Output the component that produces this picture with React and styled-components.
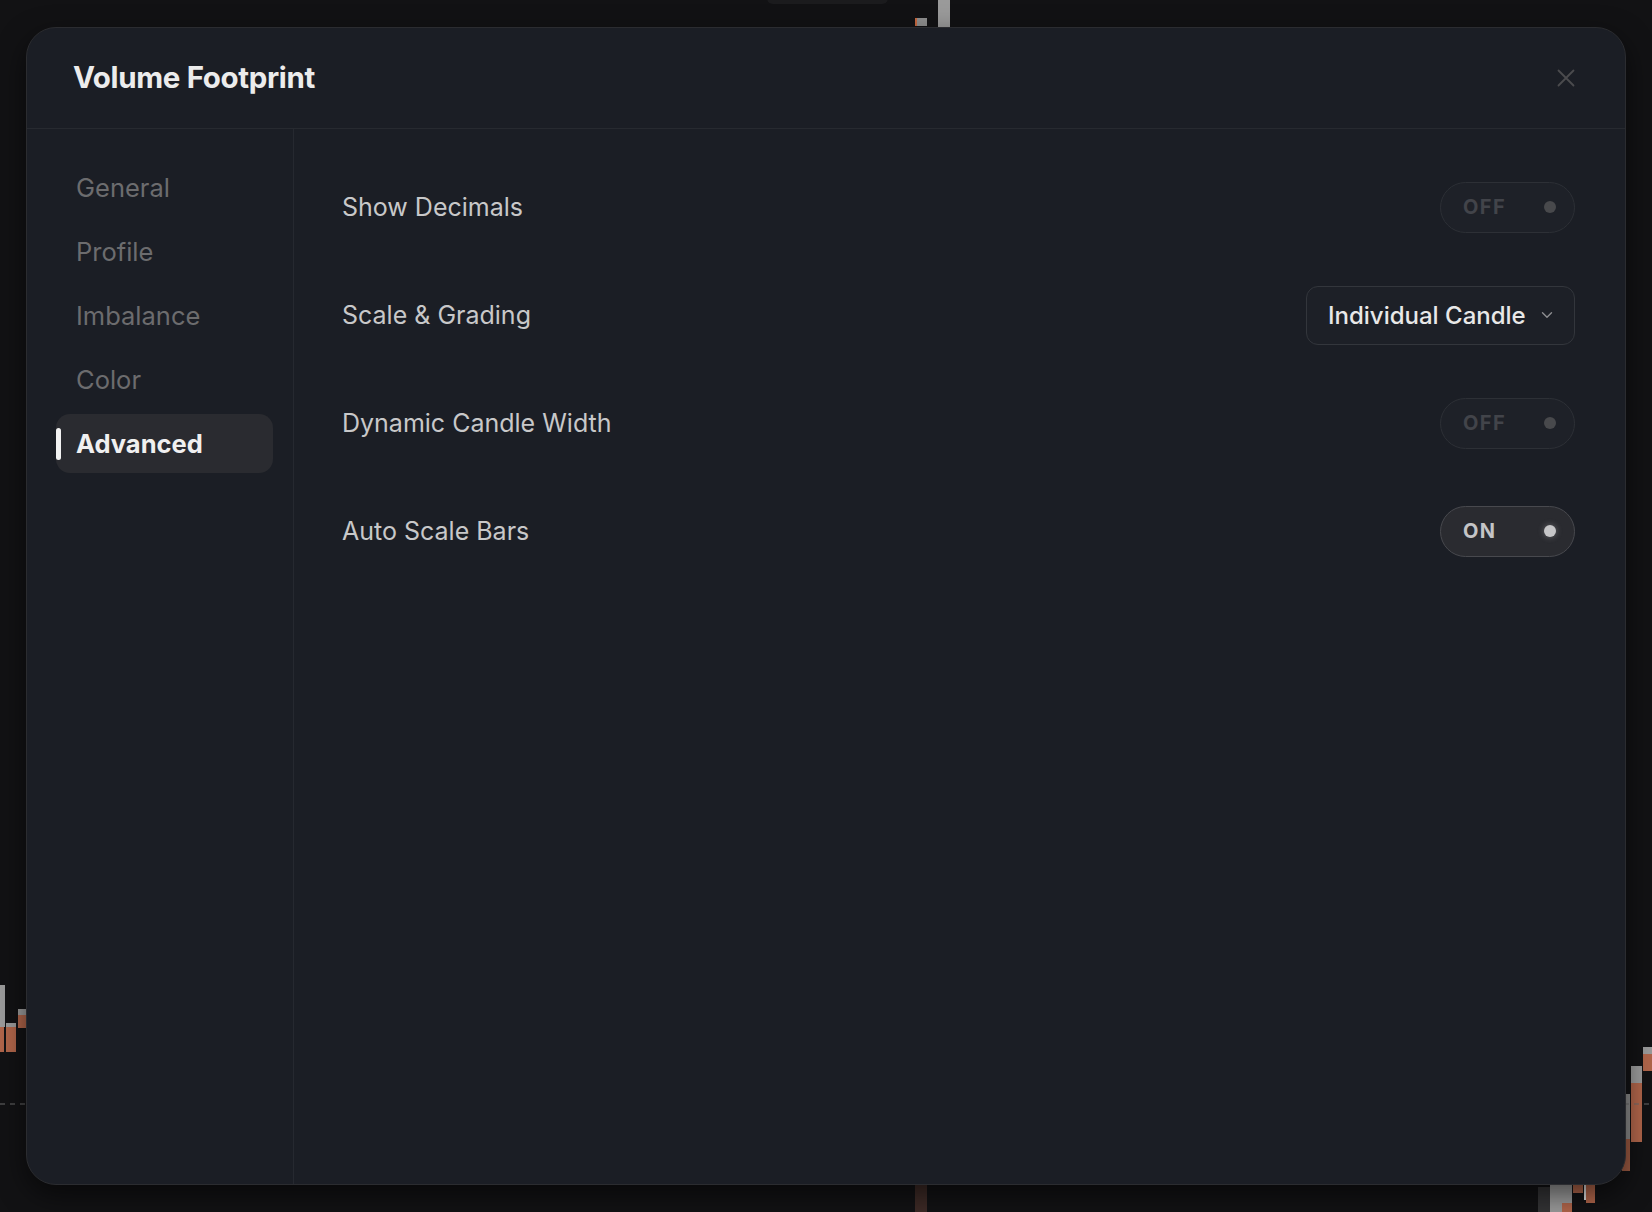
import styled, { createGlobalStyle } from "styled-components";
import { useState } from "react";

const GlobalStyle = createGlobalStyle`
  html, body {
    margin: 0;
    padding: 0;
    background: #121214;
    font-family: Inter, "Noto Sans", sans-serif;
  }
  * { box-sizing: border-box; }
`;

const navItems = ["General", "Profile", "Imbalance", "Color", "Advanced"];

const settings = [
  { id: "decimals", label: "Show Decimals", type: "toggle", on: false },
  { id: "scale", label: "Scale & Grading", type: "select", value: "Individual Candle" },
  { id: "dynamic", label: "Dynamic Candle Width", type: "toggle", on: false },
  { id: "autoscale", label: "Auto Scale Bars", type: "toggle", on: true },
];

// candle fragments of the chart that peeks out round the dialog
const candles = [
  { x: 767, y: -10, w: 121, h: 14, c: "#1b1b1d", r: 6 },
  { x: 915, y: 18, w: 12, h: 8, c: "#8f8f8f" },
  { x: 915, y: 18, w: 2, h: 8, c: "#c8683f" },
  { x: 938, y: 0, w: 12, h: 27, c: "#9a9a9a" },
  { x: 0, y: 985, w: 5, h: 42, c: "#9a9a9a" },
  { x: 0, y: 1027, w: 4, h: 25, c: "#b0654a" },
  { x: 6, y: 1023, w: 10, h: 4, c: "#9a9a9a" },
  { x: 6, y: 1027, w: 10, h: 25, c: "#b0654a" },
  { x: 18, y: 1009, w: 9, h: 6, c: "#9a9a9a" },
  { x: 18, y: 1015, w: 9, h: 13, c: "#b0654a" },
  { x: 1643, y: 1047, w: 9, h: 7, c: "#9a9a9a" },
  { x: 1643, y: 1054, w: 9, h: 17, c: "#b0654a" },
  { x: 1631, y: 1066, w: 11, h: 17, c: "#9a9a9a" },
  { x: 1631, y: 1083, w: 11, h: 59, c: "#b0654a" },
  { x: 1622, y: 1094, w: 8, h: 45, c: "#8a8a8a" },
  { x: 1622, y: 1139, w: 8, h: 32, c: "#9c5a42" },
  { x: 1538, y: 1187, w: 12, h: 25, c: "#333335" },
  { x: 1550, y: 1185, w: 12, h: 27, c: "#9a9a9a" },
  { x: 1562, y: 1185, w: 10, h: 18, c: "#9a9a9a" },
  { x: 1562, y: 1203, w: 10, h: 9, c: "#b0654a" },
  { x: 1573, y: 1185, w: 10, h: 8, c: "#b0654a" },
  { x: 1584, y: 1185, w: 2, h: 15, c: "#dddddd" },
  { x: 1586, y: 1185, w: 9, h: 18, c: "#b0654a" },
  { x: 915, y: 1185, w: 12, h: 27, c: "#3d2a26" },
];

function ChartBackdrop() {
  return (
    <Backdrop viewBox="0 0 1652 1212" preserveAspectRatio="none">
      {candles.map((c, i) => (
        <rect key={i} x={c.x} y={c.y} width={c.w} height={c.h} rx={c.r || 0} fill={c.c} />
      ))}
      <line x1="0" y1="1104" x2="28" y2="1104" stroke="#6a6a6a" strokeDasharray="5 5" />
      <line x1="1624" y1="1104" x2="1652" y2="1104" stroke="#6a6a6a" strokeDasharray="5 5" />
    </Backdrop>
  );
}

function CloseIcon() {
  return (
    <svg width="18" height="18" viewBox="0 0 18 18" fill="none">
      <path d="M1.5 1.5 16.5 16.5M16.5 1.5 1.5 16.5" stroke="#4b4b4e" strokeWidth="1.8" strokeLinecap="round" />
    </svg>
  );
}

function Chevron() {
  return (
    <svg width="12" height="8" viewBox="0 0 12 8" fill="none">
      <path d="M1.5 1.8 6 6.2l4.5-4.4" stroke="#8d8d90" strokeWidth="1.4" strokeLinecap="round" strokeLinejoin="round" />
    </svg>
  );
}

export default function App() {
  const [active, setActive] = useState("Advanced");
  const [values, setValues] = useState(
    Object.fromEntries(settings.filter((s) => s.type === "toggle").map((s) => [s.id, s.on]))
  );

  const flip = (id) => setValues((v) => ({ ...v, [id]: !v[id] }));

  return (
    <Page>
      <GlobalStyle />
      <ChartBackdrop />
      <Dialog>
        <Header>
          <Title>Volume Footprint</Title>
          <CloseButton aria-label="Close">
            <CloseIcon />
          </CloseButton>
        </Header>
        <Body>
          <Sidebar>
            {navItems.map((item) => (
              <NavItem key={item} $active={item === active} onClick={() => setActive(item)}>
                {item}
              </NavItem>
            ))}
          </Sidebar>
          <Content>
            {settings.map((s) => (
              <Row key={s.id}>
                <Label>{s.label}</Label>
                {s.type === "toggle" ? (
                  <Toggle $on={values[s.id]} onClick={() => flip(s.id)}>
                    <ToggleText $on={values[s.id]}>{values[s.id] ? "ON" : "OFF"}</ToggleText>
                    <Dot $on={values[s.id]} />
                  </Toggle>
                ) : (
                  <Select>
                    <span>{s.value}</span>
                    <Chevron />
                  </Select>
                )}
              </Row>
            ))}
          </Content>
        </Body>
      </Dialog>
    </Page>
  );
}

const Page = styled.div`
  position: relative;
  width: 100vw;
  height: 100vh;
  display: flex;
  align-items: center;
  justify-content: center;
  overflow: hidden;
`;

const Backdrop = styled.svg`
  position: absolute;
  inset: 0;
  width: 100%;
  height: 100%;
`;

const Dialog = styled.div`
  position: relative;
  width: 1600px;
  height: 1158px;
  margin-top: -1px;
  background: #1b1e25;
  border: 1.5px solid #2b2c30;
  border-radius: 30px;
  box-shadow: 0 10px 28px rgba(0, 0, 0, 0.55);
  display: flex;
  flex-direction: column;
  overflow: hidden;
`;

const Header = styled.div`
  height: 101px;
  flex-shrink: 0;
  display: flex;
  align-items: center;
  justify-content: space-between;
  padding: 0 43px 0 46px;
  border-bottom: 1.5px solid #272a30;
`;

const Title = styled.h1`
  margin: 0;
  margin-top: -1px;
  font-size: 29.5px;
  font-weight: 700;
  letter-spacing: -0.012em;
  color: #ececec;
`;

const CloseButton = styled.button`
  width: 32px;
  height: 32px;
  border: none;
  background: transparent;
  padding: 0;
  display: flex;
  align-items: center;
  justify-content: center;
  cursor: pointer;
`;

const Body = styled.div`
  flex: 1;
  display: flex;
  min-height: 0;
`;

const Sidebar = styled.nav`
  width: 267px;
  flex-shrink: 0;
  border-right: 1.5px solid #262930;
  padding: 29px 20px 30px 29px;
  display: flex;
  flex-direction: column;
  gap: 5px;
`;

const NavItem = styled.div`
  position: relative;
  height: 59px;
  display: flex;
  align-items: center;
  padding-left: 20px;
  border-radius: 14px;
  font-size: 25.5px;
  font-weight: ${({ $active }) => ($active ? 700 : 400)};
  color: ${({ $active }) => ($active ? "#f0f0f0" : "#6c6c6e")};
  background: ${({ $active }) => ($active ? "#2a2b30" : "transparent")};
  cursor: pointer;

  &::before {
    content: "";
    display: ${({ $active }) => ($active ? "block" : "none")};
    position: absolute;
    left: 0;
    top: 14px;
    width: 5px;
    height: 32px;
    border-radius: 3px;
    background: #f2f2f2;
  }
`;

const Content = styled.div`
  flex: 1;
  padding: 49px 50px 50px 48px;
  display: flex;
  flex-direction: column;
  gap: 49px;
`;

const Row = styled.div`
  min-height: 59px;
  display: flex;
  align-items: center;
  justify-content: space-between;
`;

const Label = styled.span`
  font-size: 25px;
  color: #c8c8c9;
`;

const Toggle = styled.button`
  width: 135px;
  height: 51px;
  border-radius: 999px;
  border: 1.5px solid ${({ $on }) => ($on ? "#48494e" : "#2d3036")};
  background: ${({ $on }) => ($on ? "#2a2b30" : "#1e2128")};
  display: flex;
  align-items: center;
  justify-content: space-between;
  padding: 0 18px 0 22px;
  cursor: pointer;
`;

const ToggleText = styled.span`
  font-family: Inter, sans-serif;
  font-size: 20px;
  font-weight: 700;
  letter-spacing: 0.07em;
  color: ${({ $on }) => ($on ? "#c4c4c6" : "#42444a")};
`;

const Dot = styled.span`
  width: 12px;
  height: 12px;
  border-radius: 50%;
  background: ${({ $on }) => ($on ? "#c6c6c8" : "#48494c")};
  box-shadow: ${({ $on }) => ($on ? "0 0 6px rgba(220,220,220,0.35)" : "none")};
`;

const Select = styled.button`
  width: 269px;
  height: 59px;
  border-radius: 12px;
  border: 1.5px solid #33363c;
  background: #1d2027;
  display: flex;
  align-items: center;
  justify-content: space-between;
  padding: 0 21px 0 21px;
  font-family: Inter, sans-serif;
  font-size: 24px;
  font-weight: 500;
  color: #e8e8e8;
  cursor: pointer;
`;
